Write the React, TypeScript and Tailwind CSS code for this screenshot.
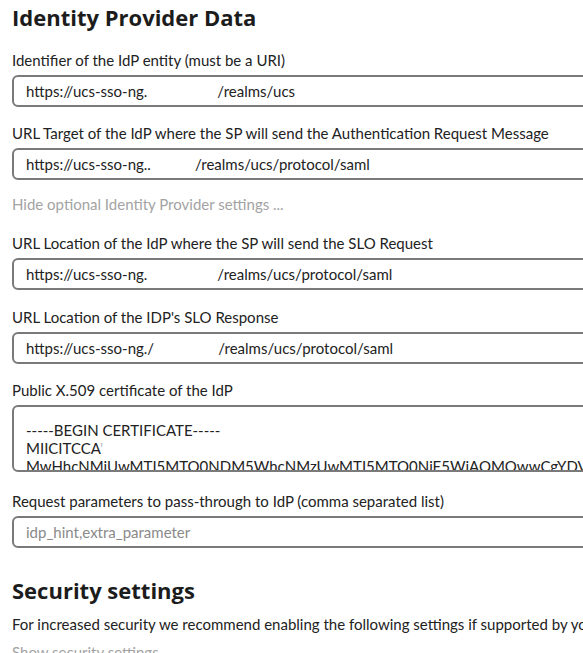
import React from 'react'

const font = { fontFamily: '"Lato", "Liberation Sans", sans-serif' }
const headFont = { fontFamily: '"Open Sans", "Liberation Sans", sans-serif' }

function Label({ children, className = '' }: { children: React.ReactNode; className?: string }) {
  return <div className={`text-[15px] leading-[20px] text-[#222] ${className}`}>{children}</div>
}

function UrlField({ head, gap, tail }: { head: string; gap: number; tail: string }) {
  return (
    <div className="mt-[5px] flex h-[32px] w-[640px] items-center whitespace-nowrap rounded-[6px] border-2 border-[#7a7a7a] pl-[12px] text-[15px] text-[#222]">
      <span>{head}</span>
      <span className="inline-block" style={{ width: gap }} />
      <span>{tail}</span>
    </div>
  )
}

export default function App() {
  return (
    <div className="h-[653px] w-[583px] overflow-hidden bg-white pl-[12px]" style={font}>
      <h2 className="pt-[3px] text-[22px] font-bold leading-[28px] text-[#1c1c1c]" style={headFont}>
        Identity Provider Data
      </h2>

      <Label className="mt-[19px]">Identifier of the IdP entity (must be a URI)</Label>
      <UrlField head="https://ucs-sso-ng." gap={70} tail="/realms/ucs" />

      <Label className="mt-[16px]">URL Target of the IdP where the SP will send the Authentication Request Message</Label>
      <UrlField head="https://ucs-sso-ng.." gap={44} tail="/realms/ucs/protocol/saml" />

      <div className="mt-[14px] text-[15px] leading-[20px] text-[#a3a3a3]">Hide optional Identity Provider settings ...</div>

      <Label className="mt-[19px]">URL Location of the IdP where the SP will send the SLO Request</Label>
      <UrlField head="https://ucs-sso-ng." gap={70} tail="/realms/ucs/protocol/saml" />

      <Label className="mt-[17px]">URL Location of the IDP's SLO Response</Label>
      <UrlField head="https://ucs-sso-ng./" gap={64} tail="/realms/ucs/protocol/saml" />

      <Label className="mt-[16px]">Public X.509 certificate of the IdP</Label>
      <div className="mt-[5px] h-[67px] w-[640px] overflow-hidden whitespace-nowrap rounded-[6px] border-2 border-[#7a7a7a] pl-[12px] pt-[14px] text-[15px] leading-[18px] text-[#222]">
        <div>-----BEGIN CERTIFICATE-----</div>
        <div>
          MIICITCCA<span className="text-[#bbb]">'</span>
        </div>
        <div>MwHhcNMjUwMTI5MTQ0NDM5WhcNMzUwMTI5MTQ0NjE5WjAOMQwwCgYDVQQDDANVQ1MwggEiMA0GCSqG</div>
      </div>

      <Label className="mt-[19px]">Request parameters to pass-through to IdP (comma separated list)</Label>
      <div className="mt-[5px] flex h-[32px] w-[640px] items-center rounded-[6px] border-2 border-[#7a7a7a] pl-[12px] text-[15px] text-[#8a8a8a]">
        idp_hint,extra_parameter
      </div>

      <h2 className="mt-[28px] text-[22px] font-bold leading-[28px] text-[#1c1c1c]" style={headFont}>
        Security settings
      </h2>
      <div className="mt-[10px] whitespace-nowrap text-[15px] leading-[20px] text-[#222]">
        For increased security we recommend enabling the following settings if supported by your service provider.
      </div>
      <div className="mt-[8px] text-[15px] leading-[20px] text-[#a3a3a3]">Show security settings</div>
    </div>
  )
}
